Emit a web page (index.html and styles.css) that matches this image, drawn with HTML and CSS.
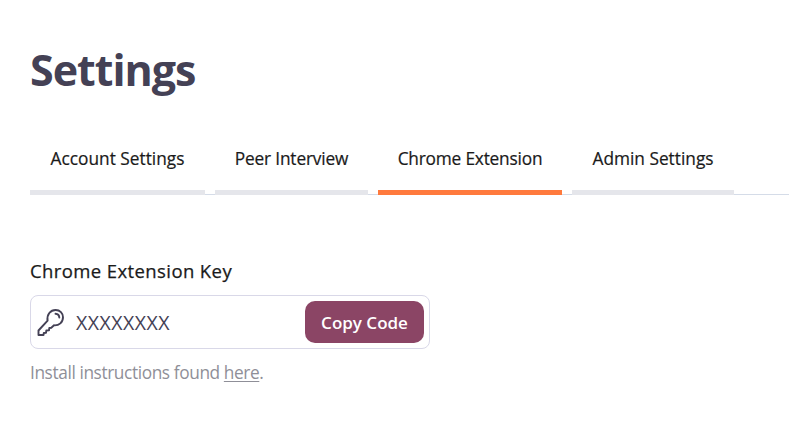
FILE: index.html
```html
<!DOCTYPE html>
<html lang="en">
<head>
<meta charset="utf-8">
<title>Settings</title>
<link rel="stylesheet" href="styles.css">
</head>
<body>
<main class="page">
  <h1 class="title"><span>Settings</span></h1>
  <nav class="tabs">
    <a class="tab tab-account">Account Settings</a>
    <a class="tab tab-peer">Peer Interview</a>
    <a class="tab tab-chrome active">Chrome Extension</a>
    <a class="tab tab-admin">Admin Settings</a>
  </nav>
  <section class="key-section">
    <h2 class="label"><span>Chrome Extension Key</span></h2>
    <div class="key-box">
      <svg class="key-icon" viewBox="0 0 28 28" fill="none" stroke="currentColor" stroke-width="1.9" stroke-linejoin="round" stroke-linecap="round">
        <path d="M10.6 12.7C9.6 6.500 13.500 2 18.600 2C23 2 26 5.200 26 9.300C26 14.400 22 17.700 17 17.300L14.300 19.700L12.300 20L12 22.300L9.300 22.500L9 24.800L6.800 25L6.500 27L1.500 27V22.500Z"/>
        <path d="M18.500 5.800C20.800 6 22.200 7.400 22.300 9.500"/>
      </svg>
      <span class="key-value">XXXXXXXX</span>
      <button class="copy">Copy Code</button>
    </div>
    <p class="help"><span>Install instructions found <a class="link">here</a>.</span></p>
  </section>
</main>
</body>
</html>
```
FILE: styles.css
```css
* { box-sizing: border-box; }
body {
  margin: 0;
  background: #fff;
  color: #1a1a1a;
  font-family: "Open Sans", "Noto Sans", sans-serif;
  overflow: hidden;
}
.page { padding: 40px 0 0 30px; }
.title {
  margin: 0;
  height: 60px;
  line-height: 60px;
  font-size: 43px;
  font-weight: 700;
  letter-spacing: -1px;
  color: #444155;
}
.tabs {
  display: flex;
  gap: 10px;
  height: 70px;
  margin-top: 25px;
  box-shadow: inset 0 -1px #d5dce8;
}
.tab {
  border-bottom: 5px solid #e5e6eb;
  padding-top: 22px;
  line-height: 24px;
  font-size: 17.3px;
  font-weight: 500;
  -webkit-text-stroke: 0.2px currentColor;
  text-align: center;
  white-space: nowrap;
}
.tab-account { width: 175px; }
.tab-peer { width: 153px; letter-spacing: -0.15px; }
.tab-chrome { width: 184px; letter-spacing: -0.2px; }
.tab-admin { width: 162px; }
.active { border-color: #ff7a3d; }
.key-section { padding-top: 62px; }
.label {
  margin: 0 0 10px;
  line-height: 28px;
  font-size: 18.5px;
  font-weight: 500;
  letter-spacing: 0.4px;
  -webkit-text-stroke: 0.25px currentColor;
}
.key-box {
  display: flex;
  align-items: center;
  width: 400px;
  height: 54px;
  padding: 0 5px 0 6px;
  border: 1px solid #d9d8e8;
  border-radius: 8px;
}
.key-icon { width: 28px; height: 28px; color: #444155; }
.key-value { margin-left: 11px; font-size: 19.5px; letter-spacing: 0.5px; color: #444155; }
.copy {
  margin-left: auto;
  width: 119px;
  height: 42px;
  padding: 0;
  border: 0;
  border-radius: 10px;
  background: #8b4565;
  color: #fff;
  font: 600 17px "Open Sans", "Noto Sans", sans-serif;
}
.help {
  margin: 10px 0 0;
  line-height: 28px;
  font-size: 17.3px;
  letter-spacing: -0.4px;
  color: #8f8f98;
}
.link { text-decoration: underline; text-underline-offset: 2px; text-decoration-thickness: 1px; }
```
